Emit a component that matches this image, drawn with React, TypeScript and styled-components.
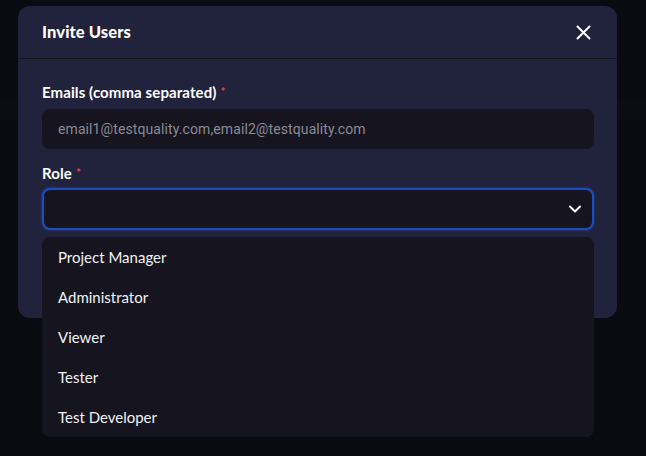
import React, { useState } from 'react'
import styled, { createGlobalStyle } from 'styled-components'

const GlobalStyle = createGlobalStyle`
  html, body {
    margin: 0;
    padding: 0;
  }

  body {
    background: linear-gradient(
      to bottom,
      #0a0b10 0,
      #0a0b10 100px,
      #0c0d12 100px,
      #0c0d12 120px,
      #0a0b10 120px
    );
    font-family: Lato, 'Noto Sans', sans-serif;
    color: #ffffff;
    min-height: 456px;
  }
`

const StyledPage = styled.div`
  padding: 6px 0 0 18px;
  width: 599px;
`

const Modal = styled.div`
  background: #21223b;
  border-radius: 12px;
  height: 312px;
  box-sizing: border-box;
`

const ModalHeader = styled.div`
  display: flex;
  align-items: center;
  justify-content: space-between;
  height: 52px;
  padding: 0 24px;
  border-bottom: 1px solid #15161f;

  h2 {
    margin: 0;
    font-size: 16.5px;
    font-weight: 900;
    letter-spacing: 0.1px;
  }
`

const CloseButton = styled.button`
  display: flex;
  align-items: center;
  justify-content: center;
  background: none;
  border: none;
  padding: 0;
  margin-right: 2px;
  color: #ffffff;
  cursor: pointer;
`

const ModalBody = styled.div`
  padding: 24px 23px 0 24px;
`

const Field = styled.div<{ $gap?: number }>`
  display: flex;
  flex-direction: column;
  margin-bottom: 15px;
  position: relative;

  label {
    margin-bottom: ${(p) => p.$gap ?? 8}px;
  }
`

const Label = styled.label`
  font-size: 15px;
  font-weight: 700;
  line-height: 18px;
  letter-spacing: 0.1px;

  span {
    color: #e5483b;
    margin-left: 4px;
    font-size: 12px;
    vertical-align: top;
  }
`

const TextInput = styled.input`
  height: 40px;
  box-sizing: border-box;
  background: #15141f;
  border: none;
  border-radius: 8px;
  padding: 0 16px;
  color: #ffffff;
  font-family: Roboto, 'Liberation Sans', sans-serif;
  font-size: 14px;
  letter-spacing: 0.1px;
  outline: none;

  &::placeholder {
    color: #8b8a96;
  }
`

const SelectBox = styled.div<{ $open: boolean }>`
  height: 42px;
  box-sizing: border-box;
  background: #15141f;
  border: 2px solid ${(p) => (p.$open ? '#1d4cbc' : 'transparent')};
  box-shadow: ${(p) => (p.$open ? '0 0 3px rgba(40, 90, 220, 0.6)' : 'none')};
  border-radius: 8px;
  display: flex;
  align-items: center;
  justify-content: flex-end;
  padding: 0 11px;
  cursor: pointer;
`

const Menu = styled.ul`
  position: absolute;
  top: calc(100% + 7px);
  left: 0;
  right: 0;
  margin: 0;
  padding: 0;
  list-style: none;
  background: #16151f;
  border-radius: 8px;
  z-index: 10;
`

const MenuItem = styled.li`
  height: 40px;
  display: flex;
  align-items: center;
  padding: 0 16px;
  font-size: 15px;
  color: #f1f1f4;
  cursor: pointer;
`

const ROLES = ['Project Manager', 'Administrator', 'Viewer', 'Tester', 'Test Developer']

const App = (): JSX.Element => {
  const [emails, setEmails] = useState('')
  const [open, setOpen] = useState(true)

  return (
    <>
      <GlobalStyle />
      <StyledPage>
        <Modal>
          <ModalHeader>
            <h2>Invite Users</h2>
            <CloseButton aria-label="Close">
              <svg width="15" height="15" viewBox="0 0 15 15" fill="none">
                <path d="M1.5 1.5L13.5 13.5M13.5 1.5L1.5 13.5" stroke="#ffffff" strokeWidth="2" strokeLinecap="round" />
              </svg>
            </CloseButton>
          </ModalHeader>
          <ModalBody>
            <Field>
              <Label>
                Emails (comma separated)<span>*</span>
              </Label>
              <TextInput
                placeholder="email1@testquality.com,email2@testquality.com"
                value={emails}
                onChange={(e) => {
                  setEmails(e.target.value)
                }}
              />
            </Field>
            <Field $gap={6}>
              <Label>
                Role<span>*</span>
              </Label>
              <SelectBox
                $open={open}
                onClick={() => {
                  setOpen(!open)
                }}
              >
                <svg width="12" height="8" viewBox="0 0 12 8" fill="none">
                  <path d="M1 1.5L6 6.5L11 1.5" stroke="#ffffff" strokeWidth="2" strokeLinecap="round" strokeLinejoin="round" />
                </svg>
              </SelectBox>
              {open && (
                <Menu>
                  {ROLES.map((role) => (
                    <MenuItem key={role}>{role}</MenuItem>
                  ))}
                </Menu>
              )}
            </Field>
          </ModalBody>
        </Modal>
      </StyledPage>
    </>
  )
}

export default App
